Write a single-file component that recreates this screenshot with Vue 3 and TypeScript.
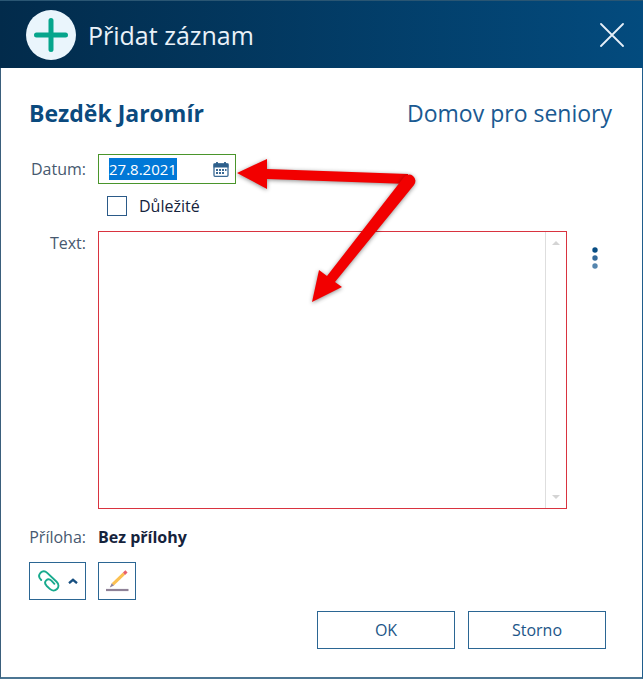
<script setup lang="ts">
import { onMounted, ref } from 'vue'

const date = ref('27.8.2021')
const important = ref(false)
const note = ref('')
const dateInput = ref<HTMLInputElement | null>(null)

onMounted(() => {
  dateInput.value?.focus()
  dateInput.value?.select()
})
</script>

<template>
  <form class="dialog" role="dialog" aria-labelledby="dialog-title" @submit.prevent>
    <header class="titlebar">
      <svg class="plus" viewBox="0 0 50 50" aria-hidden="true">
        <circle cx="25" cy="25" r="25" fill="#eaf5fc" />
        <path d="M25 10.500V39.500M10.500 25H39.500" stroke="#06a58c" stroke-width="5" stroke-linecap="round" />
      </svg>
      <h1 id="dialog-title">Přidat záznam</h1>
      <button type="button" class="close" aria-label="Zavřít">
        <svg viewBox="0 0 24 24" aria-hidden="true">
          <path d="M1 1L23 23M23 1L1 23" stroke="#e6eff8" stroke-width="1.800" stroke-linecap="round" />
        </svg>
      </button>
    </header>

    <div class="content">
      <div class="heading">
        <h2>Bezděk Jaromír</h2>
        <span class="place">Domov pro seniory</span>
      </div>

      <div class="fields">
        <label class="caption date-caption" for="date">Datum:</label>
        <div class="date-box">
          <input id="date" ref="dateInput" v-model="date" type="text" spellcheck="false" autocomplete="off" />
          <button type="button" class="calendar" aria-label="Kalendář">
            <svg viewBox="0 0 16 15" aria-hidden="true">
              <rect x="1" y="2" width="14" height="12.300" rx="1" fill="#fff" stroke="#3b6a94" stroke-width="1.300" />
              <path d="M.5 1.500H15.500V5.500H.5Z" fill="#2e608c" />
              <path d="M4 0V3M12 0V3" stroke="#2e608c" stroke-width="1.800" />
              <path d="M3 8H5M6 8H8M9 8H11M12 8H13.500M3 11H5M6 11H8M9 11H11" stroke="#3b6a94" stroke-width="1.800" />
            </svg>
          </button>
        </div>

        <div class="check-row">
          <input id="important" v-model="important" type="checkbox" />
          <label for="important">Důležité</label>
        </div>

        <label class="caption text-caption" for="note">Text:</label>
        <div class="note-row">
          <div class="note-box">
            <textarea id="note" v-model="note"></textarea>
            <div class="track" aria-hidden="true">
              <svg viewBox="0 0 8 4"><path d="M0 4L4 0L8 4Z" fill="#d4d4d4" /></svg>
              <svg viewBox="0 0 8 4"><path d="M0 0L4 4L8 0Z" fill="#d4d4d4" /></svg>
            </div>
          </div>
          <button type="button" class="more" aria-label="Další možnosti">
            <svg viewBox="0 0 6 22" aria-hidden="true">
              <circle cx="3" cy="3" r="2.700" fill="#084d83" />
              <circle cx="3" cy="11" r="2.700" fill="#33699a" />
              <circle cx="3" cy="19" r="2.700" fill="#5585ae" />
            </svg>
          </button>
        </div>

        <span class="caption attachment-row">Příloha:</span>
        <strong class="attachment-row">Bez přílohy</strong>
      </div>

      <div class="tools">
        <button type="button" class="tool attach" aria-label="Připojit soubor">
          <svg class="clip" viewBox="0 0 22 22" aria-hidden="true">
            <path d="M3.200 10C.6 7.500 .6 4.800 2.500 2.800C4.500 .9 7.200 1 9.200 2.900L18.600 11.700C21 14 21 17 19 19C17 21 14 21 11.800 18.900L8.500 15.700C6.700 13.800 6.800 11.800 8.200 10.400C9.600 9 11.700 9 13.400 10.700L16.400 13.800" fill="none" stroke="#18aa8d" stroke-width="1.900" stroke-linecap="round" stroke-linejoin="round" />
          </svg>
          <svg class="chevron" viewBox="0 0 10 6" aria-hidden="true">
            <path d="M1 5.200L5 1.800L9 5.200" fill="none" stroke="#174f80" stroke-width="2.300" />
          </svg>
        </button>
        <button type="button" class="tool" aria-label="Upravit">
          <svg class="pencil" viewBox="0 0 24 22" aria-hidden="true">
            <path d="M1 20H23.500" stroke="#8f8297" stroke-width="2.200" />
            <path d="M7.800 14.400L19 3.700" stroke="#fbc052" stroke-width="3.200" />
            <path d="M19 3.700L21.500 1.400" stroke="#e8606b" stroke-width="3.200" />
            <path d="M6.700 13.200L9 15.500L4.800 17.400Z" fill="#8f8297" />
          </svg>
        </button>
      </div>

      <footer class="actions">
        <button type="submit">OK</button>
        <button type="button">Storno</button>
      </footer>
    </div>

    <svg class="arrows" viewBox="0 0 190 150" aria-hidden="true">
      <g class="arrow">
        <path d="M7 23L37 9V19L178 24V34L37 29V39Z" fill="#f20000" />
      </g>
      <g class="arrow">
        <path d="M82 152L89 120L97 126L174 27A6 6 0 0 1 184 35L105 132L112 137Z" fill="#f20000" />
      </g>
    </svg>
  </form>
</template>

<style>
body {
  background: #fff;
}
</style>

<style scoped>
.dialog {
  position: relative;
  box-sizing: border-box;
  margin-right: 1px;
  min-height: 100vh;
  border: 1px solid #1f5d8c;
  border-bottom-width: 2px;
  border-left-color: #3a5f7c;
  border-bottom-color: #4c7693;
  background: #fff;
  color: #15233c;
  font: 16px/22px "Open Sans", "Noto Sans", sans-serif;
}

button,
input,
textarea {
  box-sizing: border-box;
  margin: 0;
  padding: 0;
  border: 0;
  outline: 0;
  background: none;
  color: inherit;
  font: inherit;
}

svg {
  display: block;
}

.titlebar {
  display: flex;
  align-items: center;
  box-sizing: border-box;
  height: 68px;
  margin: -1px -1px 0;
  padding: 0 19px 0 26px;
  border-top: 1px solid #2a5673;
  background: linear-gradient(90deg, #022b4b, #034b7e);
}

.plus {
  width: 50px;
  height: 50px;
}

h1 {
  flex: 1;
  margin: 0 0 0 12px;
  color: #e9f1f8;
  font-size: 25px;
  font-weight: 400;
  line-height: 32px;
}

.close svg {
  width: 24px;
  height: 24px;
}

.content {
  padding: 30px 30px 28px 28px;
}

.heading {
  display: flex;
  justify-content: space-between;
  color: #1a5a92;
  font-size: 23px;
  line-height: 30px;
}

h2 {
  margin: 0;
  color: #0b4a7e;
  font-size: inherit;
  font-weight: 700;
}

.fields {
  display: grid;
  grid-template-columns: 57px 1fr;
  column-gap: 12px;
  margin-top: 26px;
}

.caption {
  justify-self: end;
  color: #47596f;
}

.date-caption {
  padding-top: 4px;
}

.text-caption {
  padding-top: 1px;
}

.date-box {
  display: flex;
  align-items: center;
  box-sizing: border-box;
  width: 138px;
  height: 30px;
  padding: 0 6px 0 10px;
  border: 1px solid #4a952b;
}

.date-box input {
  flex: 1;
  min-width: 0;
  height: 22px;
  font-size: 15px;
}

.date-box input::selection {
  background: #0078d7;
  color: #fff;
}

.calendar svg {
  width: 16px;
  height: 15px;
}

.check-row {
  display: flex;
  grid-column: 2;
  align-items: center;
  gap: 12px;
  margin: 11px 0 14px 9px;
}

.check-row input {
  width: 20px;
  height: 20px;
  border: 1px solid #2b5a88;
  background: #fff;
  appearance: none;
}

.check-row input:checked {
  background: #2b5a88;
}

.note-row {
  display: flex;
  align-items: flex-start;
}

.note-box {
  display: flex;
  flex: 1;
  box-sizing: border-box;
  height: 278px;
  border: 1px solid #d9333f;
}

.note-box textarea {
  flex: 1;
  min-width: 0;
  padding: 4px 10px;
  resize: none;
}

.track {
  display: flex;
  flex-direction: column;
  justify-content: space-between;
  align-items: center;
  width: 20px;
  padding: 9px 0;
  border-left: 1px solid #dedede;
}

.track svg {
  width: 8px;
  height: 4px;
}

.more {
  margin: 16px 14px 0 25px;
}

.more svg {
  width: 6px;
  height: 22px;
}

.attachment-row {
  margin-top: 17px;
}

.tools {
  display: flex;
  gap: 12px;
  margin-top: 14px;
}

.tool,
.actions button {
  height: 38px;
  border: 1px solid #2b6693;
  background: #fff;
}

.tool {
  display: flex;
  align-items: center;
  justify-content: center;
  width: 38px;
}

.attach {
  gap: 8px;
  width: 57px;
}

.clip {
  width: 22px;
  height: 22px;
}

.chevron {
  width: 10px;
  height: 6px;
}

.pencil {
  width: 24px;
  height: 22px;
}

.actions {
  display: flex;
  justify-content: flex-end;
  gap: 13px;
  margin: 11px 6px 0 0;
}

.actions button {
  width: 138px;
  color: #1c5688;
}

.arrows {
  position: absolute;
  top: 149px;
  left: 229px;
  width: 190px;
  height: 150px;
  overflow: visible;
  pointer-events: none;
}

.arrow {
  filter: drop-shadow(0 1px 2px rgb(0 0 0 / 45%));
}
</style>
